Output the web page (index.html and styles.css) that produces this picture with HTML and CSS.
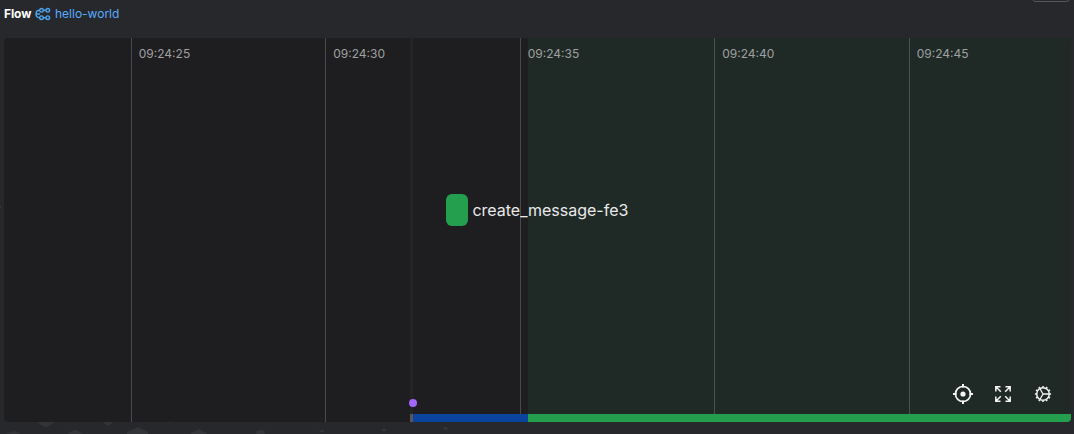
FILE: index.html
```html
<!DOCTYPE html>
<html lang="en">
<head>
<meta charset="utf-8">
<title>Flow hello-world</title>
<link rel="stylesheet" href="styles.css">
</head>
<body>
<svg class="pattern" viewBox="0 0 1074 434" aria-hidden="true">
  <path d="M36 421h20l-4 3-6 3.500-6-3.500zM101 421h14l-7 5zM166 421h7l-3.500 2zM6 434l8-3 7 3zM67 434l8-4.500 9 4.500zM127 434v-2l11-5 10 5v2zM190 434l9-5 9 5z"/>
  <ellipse cx="260.500" cy="432.500" rx="4.500" ry="2.500"/>
  <ellipse cx="322" cy="431" rx="2.500" ry="1.300"/>
  <ellipse cx="384" cy="430" rx="2.300" ry="1.500"/>
  <ellipse cx="445.500" cy="428.300" rx="2.500" ry="1.600"/>
  <circle cx="0" cy="207" r="1.500"/>
</svg>
<div class="top-button"></div>
<header class="header">
  <strong class="kind">Flow</strong>
  <svg class="flow-icon" viewBox="0 0 16 14" aria-hidden="true">
    <circle cx="6.500" cy="3.300" r="1.800"/><circle cx="12.800" cy="3.300" r="1.800"/>
    <circle cx="6.500" cy="10.700" r="1.800"/><circle cx="12.800" cy="10.700" r="1.800"/>
    <path d="M8.300 3.300H11M8.300 10.700H11M4.700 3.300C2.300 3.300 1 4.800 1 7s1.300 3.700 3.700 3.700M1 7h4"/>
  </svg>
  <a class="name">hello-world</a>
</header>
<main class="timeline">
  <div class="future"></div>
  <div class="start-line"></div>
  <div class="ticks">
    <span class="tick">09:24:25</span>
    <span class="tick">09:24:30</span>
    <span class="tick">09:24:35</span>
    <span class="tick">09:24:40</span>
    <span class="tick">09:24:45</span>
  </div>
  <div class="node"><span class="node-box"></span><span class="node-label">create_message-fe3</span></div>
  <span class="event"></span>
  <div class="tools">
    <svg viewBox="0 0 20 20" aria-hidden="true">
      <circle cx="10" cy="10" r="7.500" stroke-width="1.700"/><circle class="dot" cx="10" cy="10" r="2.600"/>
      <path stroke-width="2" d="M10 0v3.500M10 16.500V20M0 10h3.500M16.500 10H20"/>
    </svg>
    <svg viewBox="0 0 20 20" aria-hidden="true">
      <path stroke-width="1.500" d="M2.800 7.500V2.800h4.700M2.800 2.800l5 5M12.500 2.800h4.700v4.700M17.200 2.800l-5 5M2.800 12.500v4.700h4.700M2.800 17.200l5-5M12.500 17.200h4.700v-4.700M17.200 17.200l-5-5"/>
    </svg>
    <svg viewBox="0 0 20 20" aria-hidden="true">
      <circle cx="10" cy="10" r="6.300" stroke-width="1.500"/>
      <circle cx="10" cy="10" r="7.500" stroke-width="1.200" pathLength="120" stroke-dasharray="4 6" stroke-dashoffset="2"/>
      <path stroke-width="1.300" d="M10 10h6M10 10L7 4.800M10 10l-3 5.200"/>
    </svg>
  </div>
  <div class="status-bar"><span class="pending"></span><span class="running"></span><span class="complete"></span></div>
</main>
</body>
</html>
```
FILE: styles.css
```css
* { box-sizing: border-box; }
body {
  margin: 0;
  width: 1074px;
  height: 434px;
  overflow: hidden;
  background: #27282c;
  color: #fff;
  font-family: Inter, sans-serif;
}
.pattern {
  position: absolute;
  inset: 0;
  z-index: -1;
  width: 1074px;
  height: 434px;
  fill: #333438;
}
.top-button {
  position: absolute;
  top: -20px;
  left: 1031px;
  width: 40px;
  height: 22px;
  border: 1px solid #56575b;
  border-radius: 5px;
}
.header {
  display: flex;
  align-items: center;
  height: 38px;
  padding: 0 4px 10px;
  font-size: 12px;
  line-height: 18px;
}
.kind { width: 31px; font-weight: 700; letter-spacing: -.1px; }
.flow-icon {
  width: 16px;
  height: 14px;
  margin-right: 4px;
  fill: none;
  stroke: #4ba3ee;
  stroke-width: 1.400;
}
.name { color: #58acff; }
.timeline {
  position: relative;
  display: flex;
  flex-direction: column;
  width: 1067px;
  height: 384px;
  margin-left: 4px;
  overflow: hidden;
  border-radius: 4px;
  background: #1e1e20;
}
.future {
  position: absolute;
  inset: 0 0 8px 524px;
  background: #1f2a27;
}
.start-line {
  position: absolute;
  top: 0;
  bottom: 0;
  left: 406px;
  width: 3px;
  background: #242427;
}
.ticks {
  position: relative;
  flex: 1;
  display: grid;
  grid-template-columns: repeat(5, 194.500px);
  margin: 0 0 -8px 126.750px;
}
.tick {
  padding: 8px 0 0 7px;
  border-left: 1px solid rgba(160, 160, 168, .34);
  color: #a0a0a0;
  font-size: 12px;
  line-height: 16px;
}
.node {
  position: absolute;
  top: 156px;
  left: 442.400px;
  display: flex;
  align-items: center;
  gap: 4px;
}
.node-box { width: 22px; height: 32px; border-radius: 6px; background: #239f4e; }
.node-label { color: #e9e9e9; font-size: 16px; line-height: 32px; }
.event {
  position: absolute;
  left: 405px;
  top: 361px;
  width: 8px;
  height: 8px;
  border-radius: 50%;
  background: #a366ff;
}
.tools {
  position: absolute;
  top: 346px;
  left: 949px;
  display: flex;
  gap: 20px;
}
.tools svg { width: 20px; height: 20px; fill: none; stroke: #f4f5f4; }
.tools .dot { fill: #f4f5f4; stroke: none; }
.status-bar { position: relative; display: flex; height: 8px; padding-left: 406px; }
.pending { width: 3px; background: #58535c; }
.running { width: 115px; background: #0a449d; }
.complete { flex: 1; background: #239f4e; }
```
